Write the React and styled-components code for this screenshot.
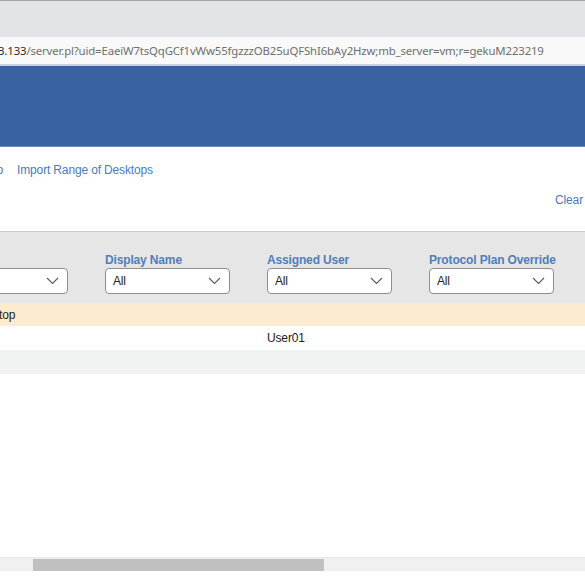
import { createGlobalStyle, styled } from 'styled-components';

const GlobalStyle = createGlobalStyle`
  html, body {
    margin: 0;
    padding: 0;
    background: #ffffff;
    overflow: hidden;
  }
  body {
    font-family: 'Liberation Sans', Arial, sans-serif;
  }
`;

// horizontal scroll offset of the page inside the window
const SCROLL_X = 57;

const columns = [
  { label: 'Pool', value: 'All' },
  { label: 'Display Name', value: 'All' },
  { label: 'Assigned User', value: 'All' },
  { label: 'Protocol Plan Override', value: 'All' },
];

const rows = [
  { tone: 'group', cells: ['Static Desktop', '', '', ''] },
  { tone: 'plain', cells: ['', '', 'User01', ''] },
  { tone: 'alt', cells: ['', '', '', ''] },
];

function Chevron() {
  return (
    <svg width="13" height="8" viewBox="0 0 13 8" fill="none">
      <path d="M1 1l5.5 5.5L12 1" stroke="#5a5a5a" strokeWidth="1.1" />
    </svg>
  );
}

function FilterSelect({ value }) {
  return (
    <StyledSelect>
      <span>{value}</span>
      <Chevron />
    </StyledSelect>
  );
}

function App() {
  return (
    <>
      <GlobalStyle />
      <StyledWindow>
        <StyledTabStrip />
        <StyledAddressBar>
          <StyledHost>3.133</StyledHost>
          <StyledPath>/server.pl?uid=EaeiW7tsQqGCf1vWw55fgzzzOB25uQFShI6bAy2Hzw;mb_server=vm;r=gekuM223219</StyledPath>
        </StyledAddressBar>
        <StyledBanner />

        <StyledPage $shift={SCROLL_X}>
          <StyledActions>
            <StyledLink>Add Desktop</StyledLink>
            <StyledLink>Import Range of Desktops</StyledLink>
          </StyledActions>
          <StyledClearRow>
            <StyledLink>Clear</StyledLink>
          </StyledClearRow>

          <StyledFilterBar>
            {columns.map(col => (
              <StyledFilterCell key={col.label}>
                <StyledFilterLabel>{col.label}</StyledFilterLabel>
                <FilterSelect value={col.value} />
              </StyledFilterCell>
            ))}
          </StyledFilterBar>

          {rows.map((row, i) => (
            <StyledRow key={i} $tone={row.tone}>
              {row.cells.map((cell, j) => (
                <StyledCell key={j} $indent={row.tone === 'group' && j === 0}>
                  {cell}
                </StyledCell>
              ))}
            </StyledRow>
          ))}
        </StyledPage>

        <StyledScrollTrack>
          <StyledScrollThumb />
        </StyledScrollTrack>
        <StyledBottomGap />
      </StyledWindow>
    </>
  );
}

export default App;

const StyledWindow = styled.div`
  display: flex;
  flex-direction: column;
  width: 585px;
  height: 585px;
  overflow: hidden;
`;

const StyledTabStrip = styled.div`
  height: 36px;
  flex: none;
  background: #e3e4e8;
  border-top: 1px solid #a3a3a3;
`;

const StyledAddressBar = styled.div`
  height: 27px;
  flex: none;
  display: flex;
  align-items: center;
  background: #f9f9f9;
  border-bottom: 2px solid #cdd0d5;
  font-family: 'Noto Sans', 'Open Sans', sans-serif;
  font-size: 11.4px;
  letter-spacing: -0.15px;
  white-space: nowrap;
  overflow: hidden;
  & > span:first-child {
    margin-left: -2px;
  }
`;

const StyledHost = styled.span`
  color: #2b2b2b;
`;

const StyledPath = styled.span`
  color: #6f6f6f;
`;

const StyledBanner = styled.div`
  height: 80px;
  flex: none;
  background: #3862a0;
  border-bottom: 1px solid #6d8dbf;
`;

const StyledPage = styled.div`
  flex: 1;
  display: flex;
  flex-direction: column;
  margin-left: -${({ $shift }) => $shift}px;
  width: calc(100% + ${({ $shift }) => $shift}px);
  font-size: 12px;
  letter-spacing: -0.15px;
  color: #222;
`;

const StyledActions = styled.div`
  display: flex;
  gap: 14px;
  padding-top: 16px;
  margin-left: -7px;
  height: 14px;
  line-height: 14px;
`;

const StyledLink = styled.a`
  color: #4a7bbd;
  font-size: 12px;
  white-space: nowrap;
  cursor: pointer;
`;

const StyledClearRow = styled.div`
  display: flex;
  justify-content: flex-end;
  padding: 16px 2px 0 0;
  height: 14px;
  line-height: 14px;
  margin-bottom: 24px;
`;

const StyledFilterBar = styled.div`
  display: grid;
  grid-template-columns: repeat(4, 162px);
  height: 72px;
  padding-top: 21px;
  box-sizing: border-box;
  background: #e6e6e6;
  border-top: 1px solid #f3c98a;
`;

const StyledFilterCell = styled.div`
  display: flex;
  flex-direction: column;
  gap: 1px;
`;

const StyledFilterLabel = styled.div`
  color: #4f7ebe;
  font-weight: bold;
  font-size: 12px;
  line-height: 14px;
  white-space: nowrap;
`;

const StyledSelect = styled.div`
  width: 125px;
  height: 26px;
  box-sizing: border-box;
  display: flex;
  align-items: center;
  justify-content: space-between;
  padding: 0 8px 0 7px;
  background: #ffffff;
  border: 1px solid #8e8e8e;
  border-radius: 4px;
  color: #222;
  font-size: 12px;
`;

const rowColors = {
  group: '#fdebd0',
  plain: '#ffffff',
  alt: '#f1f2f2',
};

const StyledRow = styled.div`
  display: grid;
  grid-template-columns: repeat(4, 162px);
  align-items: center;
  height: ${({ $tone }) => ($tone === 'group' ? 23 : 24)}px;
  background: ${({ $tone }) => rowColors[$tone]};
`;

const StyledCell = styled.div`
  font-size: 12px;
  color: #222;
  white-space: nowrap;
  margin-left: ${({ $indent }) => ($indent ? '-3px' : '0')};
`;

const StyledScrollTrack = styled.div`
  flex: none;
  height: 14px;
  display: flex;
  align-items: center;
  background: #f0f0f0;
  border-top: 1px solid #e8e8e8;
  box-sizing: border-box;
`;

const StyledScrollThumb = styled.div`
  margin-left: 33px;
  width: 291px;
  height: 12px;
  background: #c0c0c0;
`;

const StyledBottomGap = styled.div`
  flex: none;
  height: 14px;
  background: #ffffff;
`;
